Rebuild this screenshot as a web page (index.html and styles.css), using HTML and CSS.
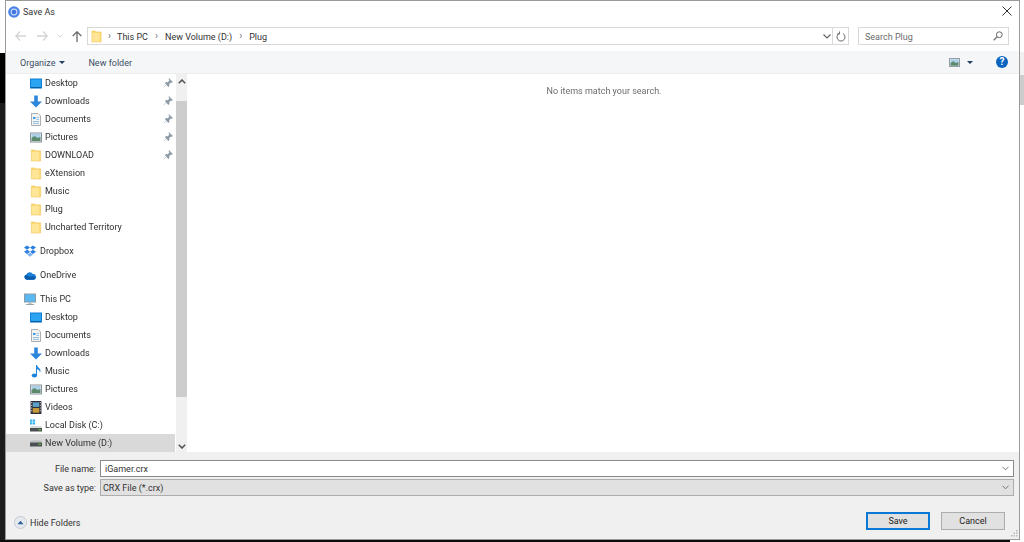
FILE: index.html
```
<!DOCTYPE html>
<html lang="en">
<head>
<meta charset="utf-8">
<title>Save As</title>
<link rel="stylesheet" href="styles.css">
</head>
<body>
<svg class="defs" width="0" height="0" aria-hidden="true">
  <defs>
    <symbol id="i-folder" viewBox="0 0 12 14">
      <path d="M1 1h3.500l1 1H11v11H1z" fill="#fbd66e" stroke="#eec65c" stroke-width=".6"/>
      <path d="M1.500 3h8v9.500h-8z" fill="#ffe596"/>
    </symbol>
    <symbol id="i-desktop" viewBox="0 0 12 10">
      <rect x="0" y="0" width="12" height="10" fill="#0f7fd8"/>
      <rect x="1" y="1" width="10" height="7.600" fill="#2aa3f0"/>
      <rect x="1" y="8.600" width="10" height="1" fill="#0b5a9e"/>
    </symbol>
    <symbol id="i-down" viewBox="0 0 12 12">
      <path d="M4.200 0h3.600v6H12L6 12 0 6h4.200z" fill="#2b86dc"/>
    </symbol>
    <symbol id="i-doc" viewBox="0 0 10 13">
      <path d="M.5.500h6.500l2.500 2.500v9.500h-9z" fill="#f4f4f4" stroke="#a8aeb4"/>
      <path d="M2 4h2.500v2H2z" fill="#3d9be0"/>
      <path d="M5.500 4.500H8M5.500 6.500H8M2 8.500h6M2 10.300h6" stroke="#7fb4d8" stroke-width=".8"/>
    </symbol>
    <symbol id="i-pic" viewBox="0 0 12 10">
      <rect x=".5" y=".5" width="11" height="9" fill="#e8eef2" stroke="#8a949c"/>
      <rect x="1.500" y="1.500" width="9" height="4" fill="#a9cfe8"/>
      <path d="M1.500 5.500l3-2 3 2 3-1v4h-9z" fill="#5d8a6a"/>
    </symbol>
    <symbol id="i-pin" viewBox="0 0 10 10">
      <path d="M6 .5l3.500 3.500-1.200.7-.6-.3-1.700 1.700.1 1.800-.8.800L2.200 5.100l.8-.8 1.800.1 1.700-1.700-.3-.6zM3.200 6.800L.8 9.200" fill="#8b98a5" stroke="#8b98a5" stroke-width=".5"/>
    </symbol>
    <symbol id="i-dropbox" viewBox="0 0 13 13">
      <path d="M3.300 0L6.500 2.300 3.300 4.600 0 2.300zM9.700 0L13 2.300 9.700 4.600 6.500 2.300zM3.300 4.600L6.500 6.900 3.300 9.200 0 6.900zM9.700 4.600L13 6.900 9.700 9.200 6.500 6.900z" fill="#2b7fe0"/>
      <path d="M3.300 9.800l3.200-2.200 3.200 2.200-3.200 2.400z" fill="#7fb4ee"/>
    </symbol>
    <symbol id="i-cloud" viewBox="0 0 13 9">
      <path d="M3 9a2.800 2.800 0 0 1-.5-5.500A3.900 3.900 0 0 1 9.600 3 3 3 0 0 1 10.500 9z" fill="#1a80d8"/>
      <path d="M3 9a2.800 2.800 0 0 1-1.800-4.500c2.500-1 4.500 1 5.800 1.500 1.500-1 4-1 5.500.5A3 3 0 0 1 10.500 9z" fill="#0b5cac"/>
    </symbol>
    <symbol id="i-pc" viewBox="0 0 12 12">
      <rect x=".5" y=".5" width="11" height="8" fill="#5ab8f2" stroke="#8c9ba6"/>
      <path d="M4.500 9h3v1.500h-3z" fill="#b4bec6"/>
      <path d="M2 10.500h8v1H2z" fill="#9aa6ae"/>
    </symbol>
    <symbol id="i-music" viewBox="0 0 10 13">
      <ellipse cx="3.400" cy="10.600" rx="2.700" ry="2" fill="#1d84dc"/>
      <path d="M5 10.500V0h1c.3 2.500 3.500 3 3.500 5.800 0 .8-.3 1.300-.6 1.700.1-2-1.700-3.200-2.900-3.500v6.500z" fill="#1d84dc"/>
    </symbol>
    <symbol id="i-video" viewBox="0 0 10 12">
      <rect width="10" height="12" fill="#2a2f38"/>
      <rect x="2" y="1.200" width="6" height="4.300" fill="#5aa0c8"/>
      <rect x="2" y="6.500" width="6" height="4.300" fill="#c99a3c"/>
      <path d="M.5 1.500h1M.5 4h1M.5 6.500h1M.5 9h1M8.500 1.500h1M8.500 4h1M8.500 6.500h1M8.500 9h1" stroke="#ddd" stroke-width=".9"/>
    </symbol>
    <symbol id="i-disk" viewBox="0 0 12 12">
      <path d="M0 0h2.300v2.300H0zM2.800 0h2.300v2.300H2.800zM0 2.800h2.300v2.300H0zM2.800 2.800h2.300v2.300H2.800z" fill="#33b5ee"/>
      <path d="M1 6.500h10l1 2H0z" fill="#d4d9dc"/>
      <path d="M0 8.500h12V12H0z" fill="#4a4f53"/>
      <path d="M8.500 9.800h2.500v1H8.500z" fill="#6fcf3c"/>
    </symbol>
    <symbol id="i-vol" viewBox="0 0 12 6">
      <path d="M1 0h10l1 2H0z" fill="#b6bbbe"/>
      <path d="M0 2h12v4H0z" fill="#4a4f53"/>
      <path d="M8.500 3.300h2.500v1H8.500z" fill="#6fcf3c"/>
    </symbol>
  </defs>
</svg>
<div class="desktop">
  <div class="upper">
    <div class="strip-left">
      <div class="seg-white"></div>
      <div class="seg-black"></div>
      <div class="seg-dark"></div>
    </div>
    <main class="window">
      <header class="titlebar">
        <svg class="app-icon" viewBox="0 0 12 12"><circle cx="6" cy="6" r="5.800" fill="#4a82e6"/><circle cx="6" cy="6" r="3.400" fill="#c9d9f7"/><circle cx="6" cy="6" r="2.300" fill="#3f75dc"/></svg>
        <span class="title">Save As</span>
        <svg class="close" viewBox="0 0 10 10"><path d="M.5.500l9 9M9.500.500l-9 9" stroke="#333" stroke-width="1" fill="none"/></svg>
      </header>
      <nav class="navbar">
        <svg class="nav-btn back" viewBox="0 0 11 10"><path d="M5 .5L.8 5 5 9.500M1 5h10" stroke="#d3d3d3" stroke-width="1.300" fill="none"/></svg>
        <svg class="nav-btn fwd" viewBox="0 0 11 10"><path d="M6 .5L10.200 5 6 9.500M10 5H0" stroke="#d3d3d3" stroke-width="1.300" fill="none"/></svg>
        <svg class="nav-chev" viewBox="0 0 6 4"><path d="M.5.500L3 3 5.500.500" stroke="#d3d3d3" fill="none"/></svg>
        <svg class="nav-btn up" viewBox="0 0 10 11"><path d="M.7 5L5 .8 9.300 5M5 1v10" stroke="#6b6b6b" stroke-width="1.300" fill="none"/></svg>
        <div class="address">
          <svg class="addr-folder"><use href="#i-folder"/></svg>
          <span class="crumb-sep">›</span><span class="crumb">This PC</span>
          <span class="crumb-sep">›</span><span class="crumb">New Volume (D:)</span>
          <span class="crumb-sep">›</span><span class="crumb">Plug</span>
          <svg class="addr-chev" viewBox="0 0 8 5"><path d="M.5.500L4 4 7.500.500" stroke="#666" stroke-width="1.200" fill="none"/></svg>
          <span class="addr-refresh">
            <svg viewBox="0 0 10 11"><path d="M3 2.600a4 4 0 1 0 4 0M3.500.500v2.500H1" stroke="#6b6b6b" stroke-width="1" fill="none"/></svg>
          </span>
        </div>
        <div class="search">
          <span class="search-text">Search Plug</span>
          <svg viewBox="0 0 10 10"><circle cx="6.300" cy="3.700" r="2.900" stroke="#666" fill="none"/><path d="M4.200 5.800L.7 9.300" stroke="#777" stroke-width="1.400"/></svg>
        </div>
      </nav>
      <div class="toolbar">
        <span class="tool organize">Organize</span><span class="caret"></span>
        <span class="tool newfolder">New folder</span>
        <svg class="view-icon"><use href="#i-pic"/></svg>
        <span class="caret view-caret"></span>
        <span class="help">?</span>
      </div>
      <div class="content">
        <div class="nav-pane">
          <ul class="tree">
            <li class="row"><svg class="ico ico-w"><use href="#i-desktop"/></svg><span>Desktop</span><svg class="pin"><use href="#i-pin"/></svg></li>
            <li class="row"><svg class="ico"><use href="#i-down"/></svg><span>Downloads</span><svg class="pin"><use href="#i-pin"/></svg></li>
            <li class="row"><svg class="ico"><use href="#i-doc"/></svg><span>Documents</span><svg class="pin"><use href="#i-pin"/></svg></li>
            <li class="row"><svg class="ico"><use href="#i-pic"/></svg><span>Pictures</span><svg class="pin"><use href="#i-pin"/></svg></li>
            <li class="row"><svg class="ico"><use href="#i-folder"/></svg><span>DOWNLOAD</span><svg class="pin"><use href="#i-pin"/></svg></li>
            <li class="row"><svg class="ico"><use href="#i-folder"/></svg><span>eXtension</span></li>
            <li class="row"><svg class="ico"><use href="#i-folder"/></svg><span>Music</span></li>
            <li class="row"><svg class="ico"><use href="#i-folder"/></svg><span>Plug</span></li>
            <li class="row"><svg class="ico"><use href="#i-folder"/></svg><span>Uncharted Territory</span></li>
            <li class="row top"><svg class="ico"><use href="#i-dropbox"/></svg><span>Dropbox</span></li>
            <li class="row top"><svg class="ico"><use href="#i-cloud"/></svg><span>OneDrive</span></li>
            <li class="row top"><svg class="ico"><use href="#i-pc"/></svg><span>This PC</span></li>
            <li class="row"><svg class="ico"><use href="#i-desktop"/></svg><span>Desktop</span></li>
            <li class="row"><svg class="ico"><use href="#i-doc"/></svg><span>Documents</span></li>
            <li class="row"><svg class="ico"><use href="#i-down"/></svg><span>Downloads</span></li>
            <li class="row"><svg class="ico"><use href="#i-music"/></svg><span>Music</span></li>
            <li class="row"><svg class="ico"><use href="#i-pic"/></svg><span>Pictures</span></li>
            <li class="row"><svg class="ico"><use href="#i-video"/></svg><span>Videos</span></li>
            <li class="row"><svg class="ico"><use href="#i-disk"/></svg><span>Local Disk (C:)</span></li>
            <li class="row selected"><svg class="ico"><use href="#i-vol"/></svg><span>New Volume (D:)</span></li>
          </ul>
          <div class="scrollbar">
            <svg class="sb-chev" viewBox="0 0 8 5"><path d="M.8 4.200L4 1l3.200 3.200" stroke="#505050" stroke-width="1.500" fill="none"/></svg>
            <div class="thumb"></div>
            <svg class="sb-chev" viewBox="0 0 8 5"><path d="M.8.800L4 4 7.200.800" stroke="#505050" stroke-width="1.500" fill="none"/></svg>
          </div>
        </div>
        <div class="list">No items match your search.</div>
      </div>
      <footer class="footer">
        <div class="field">
          <label class="field-label">File name:</label>
          <div class="combo combo-name"><span>iGamer.crx</span><svg viewBox="0 0 8 5"><path d="M.5.500L4 4 7.500.500" stroke="#666" fill="none"/></svg></div>
        </div>
        <div class="field">
          <label class="field-label">Save as type:</label>
          <div class="combo combo-type"><span>CRX File (*.crx)</span><svg viewBox="0 0 8 5"><path d="M.5.500L4 4 7.500.500" stroke="#666" fill="none"/></svg></div>
        </div>
        <div class="actions">
          <span class="hide-btn"><svg viewBox="0 0 14 14"><circle cx="7" cy="7" r="6.500" fill="#e6eaef" stroke="#c3c9d1"/><path d="M3.800 8.800L7 5.200l3.200 3.600z" fill="#2f5f9e"/></svg><span class="hide-text">Hide Folders</span></span>
          <span class="btn btn-default">Save</span>
          <span class="btn">Cancel</span>
        </div>
        <svg class="grip" viewBox="0 0 8 8"><path d="M6 0h1.500v1.500H6zM3.500 2.500H5V4H3.500zM6 2.500h1.500V4H6zM1 5h1.500v1.500H1zM3.500 5H5v1.500H3.500zM6 5h1.500v1.500H6z" fill="#b8b8b8"/></svg>
      </footer>
    </main>
    <div class="strip-right">
      <div class="sr-a"></div>
      <div class="sr-b"></div>
      <div class="sr-thumb"></div>
    </div>
  </div>
  <div class="strip-bottom"></div>
</div>
</body>
</html>
```
FILE: styles.css
```
* { box-sizing: border-box; }
html, body { margin: 0; padding: 0; }
body {
  width: 1024px;
  height: 542px;
  overflow: hidden;
  background: #fff;
  font-family: Roboto, "Open Sans", sans-serif;
  font-size: 9px;
  color: #2b2b2b;
}
.defs { position: absolute; }
.desktop { display: flex; flex-direction: column; height: 542px; filter: blur(.4px); }
.upper { display: flex; flex: 1; min-height: 0; }
.strip-bottom { height: 2px; background: #0c0c0c; margin-right: 14px; }

.strip-left { width: 5px; display: flex; flex-direction: column; }
.seg-white { height: 53px; background: #fff; }
.seg-black { height: 50px; background: #000; }
.seg-dark { flex: 1; background: #1c1c1c; }

.strip-right { width: 4px; display: flex; flex-direction: column; }
.sr-a { height: 52px; background: #fff; }
.sr-b { height: 23px; background: #f1f1f1; }
.sr-thumb { height: 30px; background: #cdcdcd; }

.window {
  flex: 1;
  min-width: 0;
  display: flex;
  flex-direction: column;
  background: #fff;
  border: 1px solid #9a9a9a;
}

.titlebar { height: 23px; display: flex; align-items: center; padding: 0 7px 1px 2px; }
.app-icon { width: 12px; height: 12px; }
.title { margin-left: 3px; color: #333; }
.close { width: 10px; height: 10px; margin-left: auto; margin-bottom: 2px; }

.navbar { height: 27px; display: flex; align-items: center; padding: 0 0 3px 0; }
.nav-btn { width: 11px; height: 10px; }
.back { margin-left: 9px; }
.fwd { margin-left: 11px; }
.nav-chev { width: 6px; height: 4px; margin-left: 9px; }
.up { width: 10px; height: 11px; margin-left: 9px; }
.address {
  margin-left: 5px;
  width: 762px;
  height: 18px;
  border: 1px solid #d9d9d9;
  display: flex;
  align-items: center;
  padding-left: 3px;
  color: #333;
}
.addr-folder { width: 11px; height: 13px; }
.crumb { padding-top: 2px; }
.crumb-sep { color: #777; margin: 0 6px; font-size: 10px; line-height: 1; }
.crumb + .crumb-sep { margin: 0 7px; }
.addr-chev { width: 8px; height: 5px; margin-left: auto; }
.addr-refresh { width: 16px; height: 16px; margin-left: 1px; border-left: 1px solid #d9d9d9; display: flex; align-items: center; justify-content: center; }
.addr-refresh svg { width: 10px; height: 11px; }
.search {
  margin-left: 9px;
  width: 151px;
  height: 18px;
  border: 1px solid #d9d9d9;
  display: flex;
  align-items: center;
  padding: 0 5px 0 6px;
  color: #6d6d6d;
}
.search-text { padding-top: 2px; }
.search svg { width: 10px; height: 10px; margin-left: auto; }

.toolbar { height: 23px; background: #f5f6f7; border-bottom: 1px solid #eceded; display: flex; align-items: center; padding-left: 14px; padding-right: 11px; color: #3c4f66; }
.tool { padding-top: 1px; }
.caret { width: 0; height: 0; border: 3px solid transparent; border-top: 3.500px solid #1f3a63; border-bottom: 0; margin-left: 4px; }
.newfolder { margin-left: 23px; }
.view-icon { width: 11px; height: 9px; margin-left: auto; }
.view-caret { margin-left: 7px; }
.help { width: 12px; height: 12px; border-radius: 50%; background: #0a64bf; color: #fff; font-weight: 700; font-size: 10px; line-height: 12px; text-align: center; margin-left: 23px; }

.content { height: 378px; display: flex; }
.nav-pane { width: 183px; display: flex; }
.tree { list-style: none; margin: 0; padding: 0; width: 169px; display: flex; flex-direction: column; flex: none; }
.row { height: 18px; display: flex; align-items: center; padding-left: 24px; padding-right: 2px; color: #2f2f2f; }
.row span { margin-left: 3px; position: relative; top: -.5px; }
.ico { width: 12px; height: 13px; flex: none; }
.pin { width: 10px; height: 10px; margin-left: auto; }
.row.top { padding-left: 18px; margin-top: 6px; }
.row.top span { margin-left: 4px; }
.row.selected { background: #d9d9d9; }
.scrollbar { width: 11px; margin-left: 1px; background: #f0f0f0; display: flex; flex-direction: column; align-items: center; }
.sb-chev { width: 8px; height: 5px; flex: none; margin: 5px 0; }
.sb-chev:last-child { margin: 0 0 4px; }
.thumb { width: 11px; height: 296px; margin-top: 12px; margin-bottom: 47px; background: #cdcdcd; flex: none; }
.list { flex: 1; text-align: center; padding-top: 12px; color: #6d6d6d; }

.footer { flex: 1; position: relative; background: #f0f0f0; padding-top: 8px; display: flex; flex-direction: column; }
.field { display: flex; align-items: center; margin-bottom: 2px; color: #333; }
.field-label { width: 90px; text-align: right; margin-right: 4px; }
.combo { width: 914px; height: 17px; display: flex; align-items: center; padding: 0 4px; }
.combo svg { width: 7px; height: 5px; margin-left: auto; }
.combo-name { background: #fff; border: 1px solid #8a8a8a; }
.combo-type { background: #e1e1e1; border: 1px solid #adadad; padding-left: 2px; }
.actions { margin-top: 14px; display: flex; align-items: center; padding-right: 14px; }
.hide-btn { display: flex; align-items: center; margin: 2px auto 0 8px; color: #333; }
.hide-text { padding-top: 1px; }
.hide-btn svg { width: 13px; height: 13px; margin-right: 3px; }
.btn { width: 64px; height: 18px; background: #e1e1e1; border: 1px solid #adadad; display: flex; align-items: center; justify-content: center; margin-left: 11px; color: #222; }
.btn-default { border: 2px solid #0a78d4; }
.grip { position: absolute; right: 1px; bottom: 1px; width: 8px; height: 8px; }
```
